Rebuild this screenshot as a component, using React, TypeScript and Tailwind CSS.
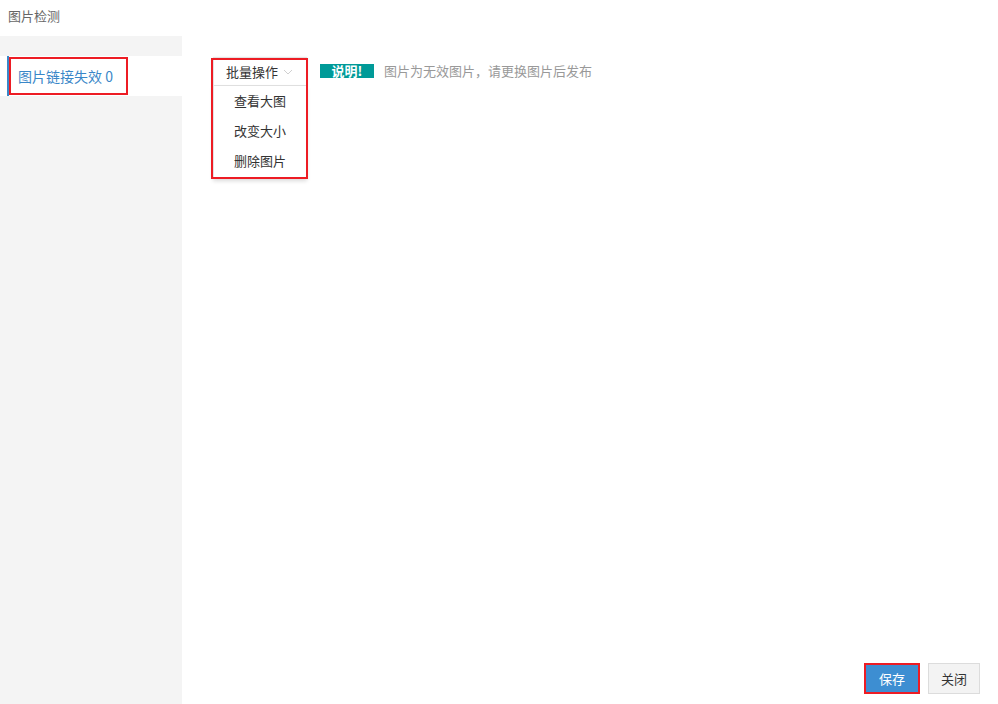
import React from "react";

export default function App() {
  return (
    <div
      className="relative w-[998px] h-[704px] bg-white text-[13px] overflow-hidden"
      style={{ fontFamily: '"Noto Sans CJK SC", "Noto Sans", sans-serif' }}
    >
      <div className="h-[36px] flex items-center pl-[8px] pb-[4px] text-[#666]">图片检测</div>
      <div className="flex h-[668px]">
        <div className="w-[182px] bg-[#f4f4f4] pt-[20px]">
          <div className="h-[40px] bg-white pl-[7px] flex">
            <div className="relative flex items-center border-l-2 border-[#3a87c8] pl-[9px] pr-[12px] text-[#3a87c8] text-[14px]">
              图片链接失效 0
              <div className="absolute left-0 top-[1px] w-[119px] h-[38px] border-2 border-[#ed1c24]" />
            </div>
          </div>
        </div>
        <div className="flex-1 relative">
          <div className="flex items-start pl-[31px] pt-[21px]">
            <div className="relative w-[94px]">
              <div className="h-[29px] border border-[#e3e3e3] shadow-[0_1px_3px_rgba(0,0,0,0.12)] flex items-center pl-[12px] text-[#333] bg-white">
                批量操作
                <svg width="10" height="6" viewBox="0 0 10 6" className="ml-[5px]">
                  <path d="M1 1l4 4 4-4" fill="none" stroke="#d0d0d0" strokeWidth="1" />
                </svg>
              </div>
              <div className="bg-white border border-t-0 border-[#e3e3e3] shadow-[0_2px_4px_rgba(0,0,0,0.15)] text-[#333] pb-[2px]">
                <div className="h-[30px] flex items-center pl-[20px]">查看大图</div>
                <div className="h-[30px] flex items-center pl-[20px]">改变大小</div>
                <div className="h-[30px] flex items-center pl-[20px]">删除图片</div>
              </div>
              <div className="absolute left-[-2px] top-[1px] w-[97px] h-[121px] border-2 border-[#ed1c24]" />
            </div>
            <div className="flex items-center ml-[13px] mt-[4px]">
              <span className="bg-[#009a98] text-white font-bold h-[14px] w-[54px] flex items-center justify-center text-[13px] leading-none">说明!</span>
              <span className="ml-[10px] text-[#999]">图片为无效图片，请更换图片后发布</span>
            </div>
          </div>
          <div className="absolute right-[18px] bottom-[10px] flex items-center gap-[9px]">
            <div className="relative">
              <button className="w-[54px] h-[29px] bg-[#3d8ed2] text-white">保存</button>
              <div className="absolute left-[-1px] top-[-1px] w-[56px] h-[31px] border-2 border-[#ed1c24]" />
            </div>
            <button className="w-[52px] h-[31px] bg-[#f3f3f3] border border-[#dcdcdc] text-[#333]">关闭</button>
          </div>
        </div>
      </div>
    </div>
  );
}
